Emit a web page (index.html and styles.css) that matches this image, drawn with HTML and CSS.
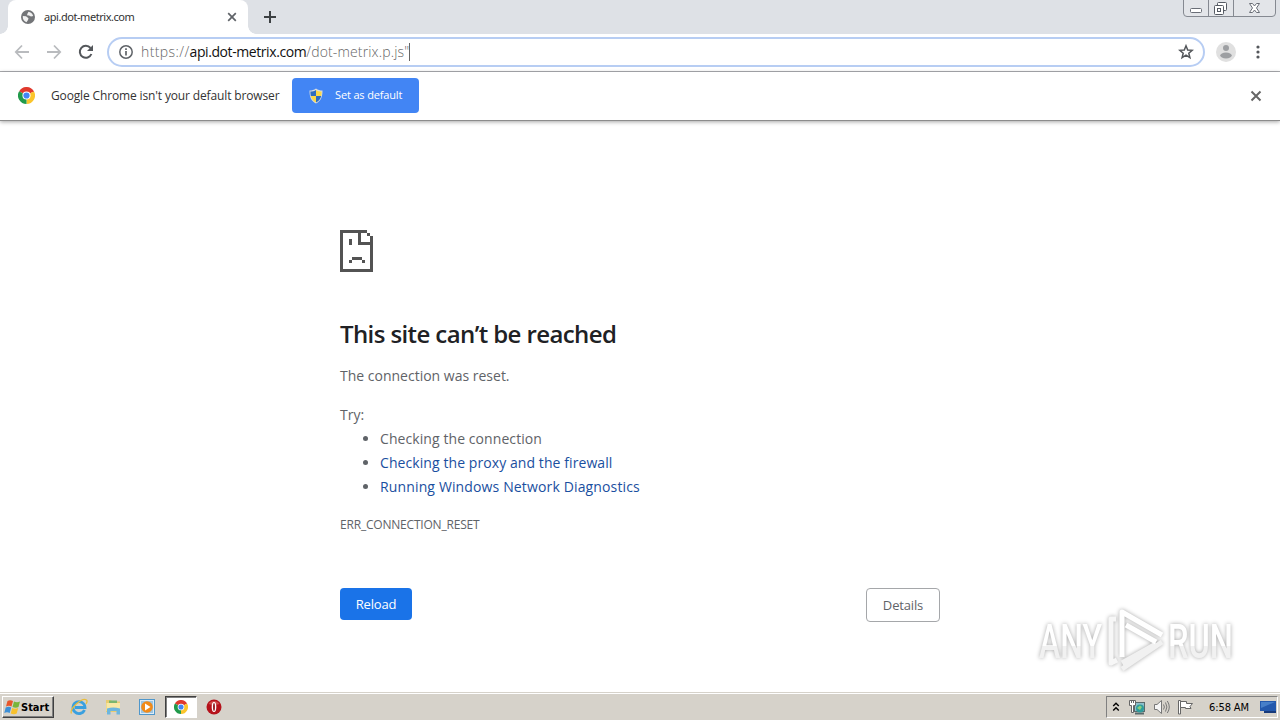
FILE: index.html
```html
<!DOCTYPE html>
<html lang="en">

<head>
    <meta charset="UTF-8">
    <meta name="viewport" content="width=device-width, initial-scale=1.0">
    <title>api.dot-metrix.com</title>
    <link rel="stylesheet" href="styles.css">
</head>

<body>
    <!-- tab strip -->
    <div class="tabstrip">
        <div class="tab">
            <svg class="globe" width="14" height="14" viewBox="0 0 14 14">
                <circle cx="7" cy="7" r="7" fill="#737578"/>
                <path d="M1.800 6 L5 6.300 L7.500 8.200 L7 10 L5.500 12.200 C3 11.500 1.500 9 1.800 6Z M7.500 1.800 C9.500 2 11.500 3.500 12.200 6 L10 6.500 L8 5.500 L6 5.300 L6.500 3.500Z" fill="#f1f1f1"/>
            </svg>
            <span class="tab-title">api.dot-metrix.com</span>
            <svg class="tab-close" width="10" height="10" viewBox="0 0 10 10"><path d="M1.2 1.2 L8.8 8.8 M8.8 1.2 L1.2 8.8" stroke="#5f6368" stroke-width="1.7"/></svg>
        </div>
        <svg class="new-tab" width="12" height="12" viewBox="0 0 12 12"><path d="M6 0 V12 M0 6 H12" stroke="#3c4043" stroke-width="2"/></svg>
        <svg class="win-buttons" width="94" height="18" viewBox="0 0 94 18">
            <path d="M0.5 0 V13 Q0.5 16.5 4 16.5 H89 Q92.500 16.5 92.500 13 V0" fill="#e3e5e9" stroke="#858991"/>
            <path d="M25.500 0 V16 M50.500 0 V16" stroke="#858991"/>
            <rect x="7.500" y="8.500" width="11" height="4" rx="1" fill="#fff" stroke="#6a6e77"/>
            <rect x="34.500" y="2.500" width="9" height="8" rx="1" fill="#fff" stroke="#555a63"/>
            <rect x="31.500" y="5.500" width="9" height="9" rx="1" fill="#fff" stroke="#555a63"/>
            <rect x="34.500" y="8.500" width="3" height="3" fill="#fff" stroke="#555a63"/>
            <path d="M66.500 3.500 H69.500 L71.500 6 L73.500 3.500 H76.500 L73.500 8 L76.500 12.500 H73.500 L71.500 10 L69.500 12.500 H66.500 L69.500 8Z" fill="#fff" stroke="#6a6e77"/>
        </svg>
    </div>

    <!-- toolbar -->
    <div class="toolbar">
        <svg class="nav-icon" width="16" height="16" viewBox="0 0 16 16"><path d="M15 8 H2 M8 1.500 L1.800 8 L8 14.500" fill="none" stroke="#b9bbbe" stroke-width="1.800"/></svg>
        <svg class="nav-icon" width="16" height="16" viewBox="0 0 16 16"><path d="M1 8 H14 M8 1.500 L14.200 8 L8 14.500" fill="none" stroke="#b9bbbe" stroke-width="1.800"/></svg>
        <svg class="nav-icon" width="16" height="16" viewBox="0 0 16 16"><path d="M13.400 10 A6 6 0 1 1 12.500 4" fill="none" stroke="#54575b" stroke-width="2"/><path d="M15 1 V7 H9Z" fill="#54575b"/></svg>
        <div class="omnibox">
            <svg width="16" height="16" viewBox="0 0 16 16"><circle cx="8" cy="8" r="6.200" fill="none" stroke="#5f6368" stroke-width="1.500"/><path d="M8 7 V11.500 M8 4.300 V6" stroke="#5f6368" stroke-width="1.700"/></svg>
            <span class="url"><span class="scheme">https://</span><span class="host">api.dot-metrix.com</span><span class="path">/dot-metrix.p.js"</span></span>
            <i class="caret"></i>
            <svg class="star" width="16" height="16" viewBox="0 0 16 16"><path d="M8 1.800 L9.700 6 L14.200 6.300 L10.800 9.200 L11.900 13.600 L8 11.200 L4.100 13.600 L5.200 9.200 L1.800 6.300 L6.300 6Z" fill="none" stroke="#54575b" stroke-width="1.500"/></svg>
        </div>
        <svg class="avatar" width="20" height="20" viewBox="0 0 20 20"><circle cx="10" cy="10" r="10" fill="#e0e0e0"/><circle cx="10" cy="6" r="3" fill="#9d9fa2"/><ellipse cx="10" cy="13.500" rx="5.800" ry="2.900" fill="#9d9fa2"/></svg>
        <svg class="dots" width="4" height="14" viewBox="0 0 4 14"><g fill="#54575b"><circle cx="2" cy="2" r="1.600"/><circle cx="2" cy="7" r="1.600"/><circle cx="2" cy="12" r="1.600"/></g></svg>
    </div>

    <!-- default browser bar -->
    <div class="infobar">
        <svg width="17" height="17" viewBox="0 0 18 18">
            <path d="M9 9 L1.200 4.500 A9 9 0 0 1 16.800 4.500Z" fill="#e0392d"/>
            <path d="M9 9 L16.800 4.500 A9 9 0 0 1 9 18Z" fill="#fbc52c"/>
            <path d="M9 9 L9 18 A9 9 0 0 1 1.200 4.500Z" fill="#219a4b"/>
            <path d="M9 5 H17 L16.800 4.500 L9 4.500Z" fill="#e0392d"/>
            <circle cx="9" cy="9" r="4.300" fill="#fff"/><circle cx="9" cy="9" r="3.300" fill="#4285f4"/>
        </svg>
        <span class="infobar-text">Google Chrome isn't your default browser</span>
        <button class="set-default">
            <svg width="14" height="16" viewBox="0 0 14 16">
                <path d="M7 0.500 C9 2 11 2.500 13.500 2.500 C13.500 9 12 13 7 15.500 C2 13 0.500 9 0.500 2.500 C3 2.500 5 2 7 0.500Z" fill="#d8dde0"/>
                <path d="M7 2 V8 H1.800 C1.500 6.500 1.400 5 1.400 3.500 C3.500 3.500 5.500 3 7 2Z" fill="#2d6cc0"/>
                <path d="M7 2 V8 H12.200 C12.500 6.500 12.600 5 12.600 3.500 C10.500 3.500 8.500 3 7 2Z" fill="#f9d849"/>
                <path d="M7 8 V14.400 C4 12.800 2.500 11 1.800 8Z" fill="#f9d849"/>
                <path d="M7 8 V14.400 C10 12.800 11.500 11 12.200 8Z" fill="#2d6cc0"/>
            </svg>
            <span>Set as default</span>
        </button>
        <svg class="infobar-close" width="12" height="12" viewBox="0 0 12 12"><path d="M1.500 1.500 L10.500 10.500 M10.500 1.500 L1.500 10.500" stroke="#666" stroke-width="2"/></svg>
    </div>

    <!-- error page -->
    <main class="page">
        <div class="error">
            <svg class="sad-page" width="33" height="42" viewBox="0 0 33 42" shape-rendering="crispEdges">
                <path d="M0 0 H27 V3 H3 V39 H30 V15 H18 V3 H21 V12 H30 V6 H33 V42 H0Z M27 3 H30 V6 H27Z" fill="#535353"/>
                <path d="M9 9 H12 V15 H9Z M12 27 H22 V30 H12Z M9 30 H12 V33 H9Z M22 30 H25 V33 H22Z" fill="#535353"/>
            </svg>
            <h1>This site can’t be reached</h1>
            <p class="summary">The connection was reset.</p>
            <p class="try">Try:</p>
            <ul>
                <li>Checking the connection</li>
                <li><a>Checking the proxy and the firewall</a></li>
                <li><a class="diagnose">Running Windows Network Diagnostics</a></li>
            </ul>
            <div class="code">ERR_CONNECTION_RESET</div>
            <div class="buttons">
                <button class="reload">Reload</button>
                <button class="details">Details</button>
            </div>
        </div>
    </main>

    <svg class="watermark" width="230" height="90" viewBox="0 0 230 90">
        <defs>
            <linearGradient id="fade" x1="0" y1="0" x2="0" y2="1">
                <stop offset="0.58" stop-color="#fff"/>
                <stop offset="0.58" stop-color="#f1f1f1"/>
            </linearGradient>
        </defs>
        <g class="wm-text" fill="url(#fade)">
            <text x="7" y="56" textLength="63" lengthAdjust="spacingAndGlyphs">ANY</text>
            <text x="136" y="56" textLength="65" lengthAdjust="spacingAndGlyphs">RUN</text>
        </g>
        <g class="wm-logo" fill="none" stroke-linejoin="round">
            <path d="M84 17 H79 V61 L85 58" stroke="#f7f7f7"/>
            <path d="M130 40 L90 67 M124 42 L90 61" stroke="#f1f1f1"/>
            <path d="M90 55 V10 L130 33 M94 23 L124 40" stroke="#fff"/>
        </g>
    </svg>

    <!-- taskbar -->
    <footer class="taskbar">
        <div class="start">
            <svg width="17" height="16" viewBox="0 0 17 16">
                <path d="M3.500 2 Q6 0.500 9 2 L7.500 7.500 Q5 6 2 7.500Z" fill="#e8562a"/>
                <path d="M10 2.500 Q13 4 16 2.500 L14.500 8 Q12 9.500 8.500 8Z" fill="#79b53a"/>
                <path d="M1.700 8.500 Q5 7 7.200 8.500 L5.700 14 Q3 12.500 0.300 14Z" fill="#3d8fd6"/>
                <path d="M8.200 9 Q11 10.500 14.200 9 L12.700 14.500 Q10 16 6.700 14.500Z" fill="#f8c12c"/>
            </svg>
            <span>Start</span>
        </div>
        <div class="quick">
            <svg width="18" height="18" viewBox="0 0 18 18">
                <path d="M14.500 12 A6 6 0 1 1 15 9.500 H5" fill="none" stroke="#3aa0df" stroke-width="2.800"/>
                <path d="M1.500 15.500 C-1 11 12 -1 16.500 2 C17.500 3 17 4.500 16 6" fill="none" stroke="#e9bd3d" stroke-width="1.300"/>
            </svg>
            <svg width="18" height="18" viewBox="0 0 18 18">
                <path d="M2 2 H7 L8 3.500 H16 V14 H2Z" fill="#e9cc70"/>
                <path d="M2.500 5 H16 V13 H2.500Z" fill="#f8e8a5"/>
                <path d="M5 2.500 H13 V5 H5Z" fill="#7bb66e"/>
                <path d="M3 16.500 V10.500 Q9 8.500 16 10.500 V16.500 H12.500 V13 H6.500 V16.500Z" fill="#6db6de"/>
            </svg>
            <svg width="18" height="18" viewBox="0 0 18 18">
                <rect x="1.500" y="1.500" width="15" height="15" fill="#dcebf6" stroke="#4f97cb"/>
                <rect x="3" y="3" width="12" height="12" fill="#9cc5e2"/>
                <circle cx="9" cy="9" r="5.800" fill="#f18a18"/><path d="M7 5.500 L12.500 9 L7 12.500Z" fill="#fff"/>
            </svg>
        </div>
        <div class="active-task">
            <svg width="14" height="14" viewBox="0 0 18 18">
                <path d="M9 9 L1.200 4.500 A9 9 0 0 1 16.800 4.500Z" fill="#e0392d"/>
                <path d="M9 9 L16.800 4.500 A9 9 0 0 1 9 18Z" fill="#fbc52c"/>
                <path d="M9 9 L9 18 A9 9 0 0 1 1.200 4.500Z" fill="#219a4b"/>
                <circle cx="9" cy="9" r="4.300" fill="#fff"/><circle cx="9" cy="9" r="3.300" fill="#4285f4"/>
            </svg>
        </div>
        <svg class="opera" width="16" height="16" viewBox="0 0 16 16"><circle cx="8" cy="8" r="7.500" fill="#b5121b"/><path d="M2.500 5 A6.500 6.500 0 0 1 13.500 5 Q8 7 2.500 5Z" fill="#d04a4a"/><ellipse cx="8" cy="8" rx="2.300" ry="5" fill="#fff"/><ellipse cx="8" cy="8" rx="0.900" ry="4" fill="#8e0c13"/></svg>
        <div class="tray">
            <svg width="8" height="10" viewBox="0 0 8 10"><path d="M1.200 4 L4 1.200 L6.800 4 M1.200 8.500 L4 5.700 L6.800 8.500" fill="none" stroke="#000" stroke-width="1.400"/></svg>
            <svg class="net" width="17" height="16" viewBox="0 0 17 16">
                <rect x="5.500" y="3.500" width="10" height="9" fill="#8dc0cb" stroke="#5a6a6c"/>
                <path d="M6 14.500 H15" stroke="#5a6a6c" stroke-width="2"/>
                <circle cx="11" cy="9.500" r="4" fill="#2e9c9c"/><path d="M8 9 L11 6.500 L13 8 L11 11Z" fill="#8bd07e"/>
                <path d="M0.500 1.500 H6.500 V6.500 H4.500 V13.500 H2.500 V6.500 H0.500Z" fill="#fff" stroke="#666"/>
                <path d="M2.500 1 V4 M4.500 1 V4" stroke="#666"/>
            </svg>
            <svg class="sound" width="17" height="16" viewBox="0 0 17 16"><path d="M1.500 5.500 H4 L8.500 1.500 V14.500 L4 10.500 H1.500Z" fill="#f5f5f5" stroke="#777"/><path d="M10.500 5.500 Q12.300 8 10.500 10.500 M12.500 3.500 Q15.300 8 12.500 12.500 M14.300 2 Q18.300 8 14.300 14" fill="none" stroke="#777"/></svg>
            <svg class="flag" width="17" height="16" viewBox="0 0 17 16"><path d="M1.500 1.500 H3.500 V15 H1.500Z" fill="#fff" stroke="#666"/><path d="M3.500 2.500 H9.500 V4.500 H15.500 L13 7.500 L14 9.500 H8.500 V8.500 H3.500Z" fill="#fff" stroke="#666"/></svg>
            <span class="clock">6:58 AM</span>
            <svg class="desktop" width="16" height="13" viewBox="0 0 16 13"><rect width="16" height="10" fill="#2459ad"/><path d="M1 1 H15 L1 7Z" fill="#477fc9"/><rect x="4" y="10" width="12" height="2" fill="#173a7b"/></svg>
        </div>
    </footer>
</body>

</html>
```
FILE: styles.css
```css
* {
    box-sizing: border-box;
}

body {
    margin: 0;
    height: 720px;
    overflow: hidden;
    display: flex;
    flex-direction: column;
    background-color: #fff;
    font-family: "Open Sans", "Noto Sans", sans-serif;
}

svg {
    display: block;
    flex-shrink: 0;
}

span, a, h1, p, .code {
    white-space: nowrap;
}

button {
    font-family: inherit;
    padding: 0;
    border: none;
    border-radius: 4px;
}

.tabstrip {
    height: 34px;
    flex-shrink: 0;
    display: flex;
    align-items: flex-start;
    background-color: #dee1e6;
    padding-left: 8px;
}

.tab {
    position: relative;
    width: 240px;
    height: 34px;
    background-color: #fff;
    border-radius: 8px 8px 0 0;
    display: flex;
    align-items: center;
    padding: 0 11px 0 13px;
}

.tab::before,
.tab::after {
    content: "";
    position: absolute;
    bottom: 0;
    width: 8px;
    height: 8px;
}

.tab::before {
    left: -8px;
    background: radial-gradient(circle at 0 0, #dee1e6 7.5px, #fff 8px);
}

.tab::after {
    right: -8px;
    background: radial-gradient(circle at 100% 0, #dee1e6 7.5px, #fff 8px);
}

.tab-title {
    margin-left: 9px;
    padding-bottom: 2px;
    font-family: "Noto Sans", sans-serif;
    font-size: 11px;
    letter-spacing: -0.45px;
    color: #333;
}

.tab-close {
    margin-left: auto;
}

.new-tab {
    margin: 11px 0 0 16px;
}

.win-buttons {
    margin: 0 3px 0 auto;
}

.toolbar {
    height: 38px;
    flex-shrink: 0;
    display: flex;
    align-items: center;
    padding: 0 20px 2px 14px;
    border-bottom: 1px solid #adaeb2;
}

.nav-icon {
    margin-right: 16px;
}

.omnibox {
    width: 1098px;
    height: 30px;
    margin-left: -3px;
    border: 2px solid #b7cdf3;
    border-radius: 15px;
    display: flex;
    align-items: center;
    padding: 0 9px;
}

.url {
    margin-left: 7px;
    font-size: 14px;
    font-weight: 300;
    color: #666;
}

.scheme {
    letter-spacing: 0.4px;
}

.host {
    font-weight: 400;
    letter-spacing: -0.42px;
    color: #111;
}

.path {
    letter-spacing: 0.15px;
}

.caret {
    width: 1px;
    height: 18px;
    background-color: #666;
}

.star {
    margin-left: auto;
}

.avatar {
    margin-left: 11px;
}

.dots {
    margin-left: auto;
}

.infobar {
    height: 49px;
    flex-shrink: 0;
    display: flex;
    align-items: center;
    padding: 0 18px 1px;
    border-bottom: 1px solid #8c8c8c;
    box-shadow: 0 1px 4px rgba(0, 0, 0, 0.35);
}

.infobar-text {
    width: 229px;
    margin-left: 16px;
    padding-bottom: 1px;
    font-size: 12px;
    letter-spacing: -0.14px;
    color: #333;
}

.set-default {
    width: 127px;
    height: 35px;
    margin-left: 12px;
    display: flex;
    align-items: center;
    padding-left: 17px;
    background-color: #4285f4;
    color: #fff;
    font-size: 11px;
    letter-spacing: -0.15px;
}

.set-default span {
    margin-left: 12px;
    padding-bottom: 2px;
}

.infobar-close {
    margin-left: auto;
}

.page {
    flex: 1;
    display: flex;
    justify-content: center;
}

.error {
    width: 600px;
    padding-top: 109px;
    color: #5f6368;
    font-size: 14px;
    line-height: 24px;
}

h1 {
    margin: 46px 0 0;
    font-size: 24px;
    line-height: 32px;
    font-weight: 600;
    letter-spacing: -0.6px;
    color: #202124;
}

.error p {
    margin: 0;
}

.error .summary {
    margin-top: 14px;
}

.error .try {
    margin-top: 15px;
}

ul {
    margin: 0;
    padding-left: 40px;
    letter-spacing: 0.08px;
}

li a {
    color: #1a4fa0;
}

.diagnose {
    letter-spacing: 0.14px;
}

.code {
    margin-top: 14px;
    font-size: 12px;
    letter-spacing: -0.2px;
}

.buttons {
    margin-top: 51px;
    display: flex;
    justify-content: space-between;
    align-items: flex-start;
}

.reload {
    width: 72px;
    height: 32px;
    background-color: #1a73e8;
    color: #fff;
    font-size: 13px;
    letter-spacing: -0.15px;
}

.details {
    width: 74px;
    height: 34px;
    background-color: #fff;
    border: 1px solid #a5a7aa;
    color: #5f6368;
    font-size: 13px;
    letter-spacing: -0.15px;
}

/* floats over the page corner */
.watermark {
    position: absolute;
    right: 18px;
    bottom: 28px;
    filter: drop-shadow(0 0 2px rgba(0, 0, 0, 0.35));
}

.wm-text {
    font-family: Roboto, sans-serif;
    font-size: 49px;
    font-weight: 500;
}

.wm-logo {
    stroke-width: 5px;
}

.taskbar {
    height: 28px;
    flex-shrink: 0;
    display: flex;
    align-items: center;
    background-color: #d6d2ca;
    border-top: 1px solid #d6d2ca;
    box-shadow: inset 0 1px #fff;
    padding: 1px 2px 0;
}

.start {
    width: 52px;
    height: 22px;
    display: flex;
    align-items: center;
    padding-left: 1px;
    border: 1px solid;
    border-color: #fff #404040 #404040 #fff;
    box-shadow: inset -1px -1px #808080;
    font: bold 11px "DejaVu Sans Condensed", "DejaVu Sans", sans-serif;
    color: #000;
}

.quick {
    display: flex;
    gap: 16px;
    margin-left: 16px;
}

.active-task {
    width: 32px;
    height: 22px;
    margin-left: 9px;
    display: flex;
    align-items: center;
    justify-content: center;
    background-color: #fff;
    border: 1px solid;
    border-color: #404040 #fff #fff #404040;
    box-shadow: inset 1px 1px #808080;
}

.opera {
    margin-left: 9px;
}

.tray {
    width: 172px;
    height: 22px;
    margin-left: auto;
    display: flex;
    align-items: center;
    padding-left: 5px;
    border: 1px solid;
    border-color: #808080 #fff #fff #808080;
}

.net {
    margin-left: 9px;
}

.sound {
    margin-left: 7px;
}

.flag {
    margin-left: 7px;
}

.clock {
    width: 42px;
    margin-left: 15px;
    font-family: "DejaVu Sans Condensed", "DejaVu Sans", sans-serif;
    font-size: 11px;
    letter-spacing: -0.1px;
    color: #000;
}

.desktop {
    margin-left: 9px;
}
```
